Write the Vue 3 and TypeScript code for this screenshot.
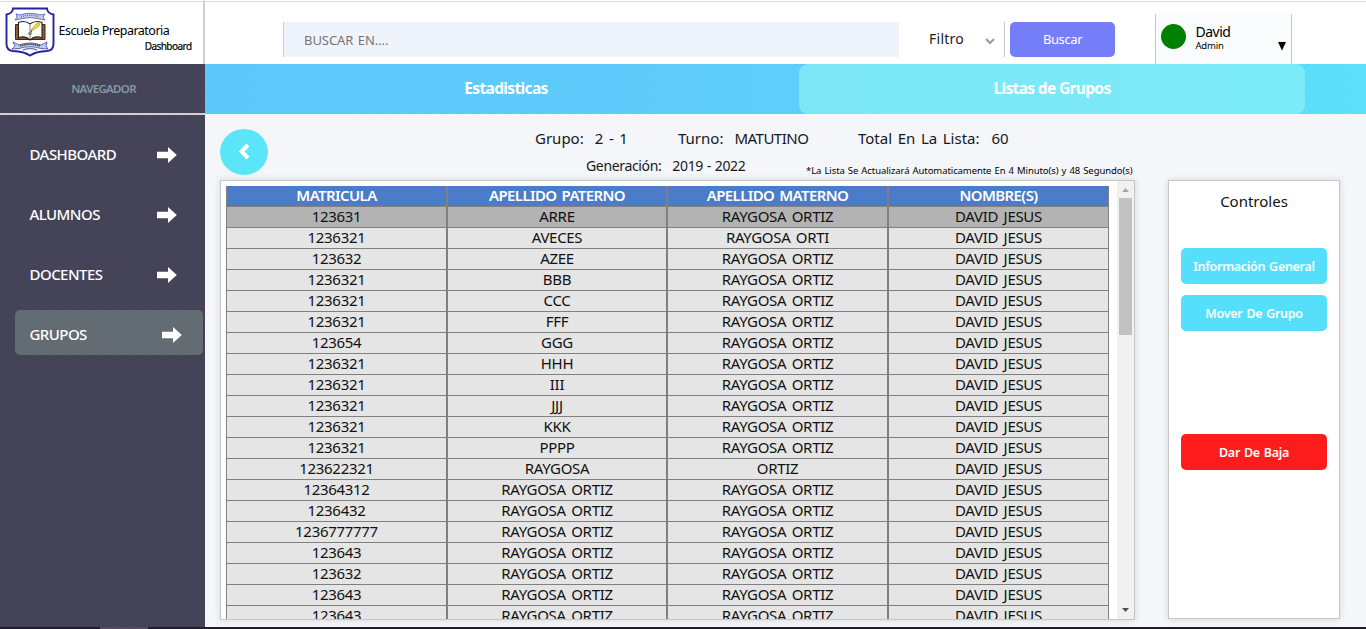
<script setup lang="ts">
interface NavItem { label: string; active?: boolean }
interface Student { id: string; paterno: string; materno: string; nombre: string }

const nav: NavItem[] = [
  { label: 'DASHBOARD' },
  { label: 'ALUMNOS' },
  { label: 'DOCENTES' },
  { label: 'GRUPOS', active: true },
]

const columns: string[] = ['MATRICULA', 'APELLIDO PATERNO', 'APELLIDO MATERNO', 'NOMBRE(S)']

const RO = 'RAYGOSA ORTIZ'
const source: [string, string, string][] = [
  ['123631', 'ARRE', RO],
  ['1236321', 'AVECES', 'RAYGOSA ORTI'],
  ['123632', 'AZEE', RO],
  ['1236321', 'BBB', RO],
  ['1236321', 'CCC', RO],
  ['1236321', 'FFF', RO],
  ['123654', 'GGG', RO],
  ['1236321', 'HHH', RO],
  ['1236321', 'III', RO],
  ['1236321', 'JJJ', RO],
  ['1236321', 'KKK', RO],
  ['1236321', 'PPPP', RO],
  ['123622321', 'RAYGOSA', 'ORTIZ'],
  ['12364312', RO, RO],
  ['1236432', RO, RO],
  ['1236777777', RO, RO],
  ['123643', RO, RO],
  ['123632', RO, RO],
  ['123643', RO, RO],
  ['123643', RO, RO],
]
const students: Student[] = source.map(([id, paterno, materno]) => ({ id, paterno, materno, nombre: 'DAVID JESUS' }))
</script>

<template>
  <div class="page">
    <div class="body">
      <aside class="sidebar">
        <div class="brand">
          <svg class="crest" width="50" height="51" viewBox="0 0 50 51">
            <path d="M8 1.500H42Q42.500 6.500 48.500 7.500V37Q48.500 43.500 42 44Q31 44.500 25 48.500Q19 44.500 8 44Q1.500 43.500 1.500 37V7.500Q7.500 6.500 8 1.500Z" fill="#fff" stroke="#24249c" stroke-width="1.900" />
            <path d="M11 7L15 8Q25 4.500 35 8L40 7L38 10L40 13L35 12Q25 9 15 12L10 13L12 10Z" fill="#c9cce9" stroke="#5057b5" stroke-width=".8" />
            <path d="M16 10Q25 6.500 34 10" fill="none" stroke="#777" stroke-width="1.400" stroke-dasharray="1 1" />
            <path d="M10.500 17.500H40V32.500H10.500Z" fill="#9a5a2e" stroke="#3b241a" />
            <path d="M13.500 15.500Q20 13 25 17Q30 13 37 15.500V31Q30 28 25 33Q20 28 13.500 31Z" fill="#fff" stroke="#222" stroke-width="1.100" />
            <path d="M25 18V32" stroke="#777" />
            <path d="M36 14.500L31 17L26.500 22.500L28 23L33.500 19.500Z" fill="#f4e022" stroke="#8c7610" stroke-width=".5" />
            <path d="M27 23L25 27" stroke="#333" />
            <circle cx="25" cy="26.500" r="1.800" fill="#7b8782" />
            <path d="M8 35L14 38Q25 34 36 38L42 35L41 39L43 42L36 41.500Q25 38 14 41.500L7 42L10 39Z" fill="#c9cce9" stroke="#3b43a4" stroke-width=".8" />
            <path d="M15 39Q25 35.500 35 39" fill="none" stroke="#444" stroke-width="1.600" stroke-dasharray="1.500 .6" />
            <path d="M18 43Q25 40 32 43" fill="none" stroke="#7077bd" stroke-width="1.500" />
          </svg>
          <div class="brand-text">
            <div class="school">Escuela Preparatoria</div>
            <div class="sub">Dashboard</div>
          </div>
        </div>
        <div class="nav-title">NAVEGADOR</div>
        <nav class="nav">
          <a v-for="item in nav" :key="item.label" class="nav-item" :class="{ active: item.active }">
            <span>{{ item.label }}</span>
            <svg width="20" height="16" viewBox="0 0 20 16"><path d="M0 4.700H11V0L19.800 8L11 16V11.300H0Z" fill="#fff" /></svg>
          </a>
        </nav>
      </aside>

      <div class="main">
        <header class="topbar">
          <div class="search">BUSCAR EN....</div>
          <div class="filter">
            <span>Filtro</span>
            <svg width="10" height="7" viewBox="0 0 10 7"><path d="M1 1L5 5L9 1" fill="none" stroke="#999" stroke-width="2" /></svg>
          </div>
          <button class="search-btn">Buscar</button>
          <div class="user">
            <span class="avatar"></span>
            <div class="who">
              <div class="name">David</div>
              <div class="role">Admin</div>
            </div>
            <svg class="caret" width="8" height="9" viewBox="0 0 8 9"><path d="M0 0H8L4 8.500Z" fill="#000" /></svg>
          </div>
        </header>

        <div class="tabs">
          <div class="tab first"><span>Estadisticas</span></div>
          <div class="tab selected"><span>Listas de Grupos</span></div>
        </div>

        <div class="content">
          <section class="left">
            <div class="heading">
              <button class="back">
                <svg width="12" height="17" viewBox="0 0 12 17"><path d="M10 2L3.500 8.500L10 15" fill="none" stroke="#fff" stroke-width="4" /></svg>
              </button>
              <div class="facts">
                <span class="grupo">Grupo:<b>2 - 1</b></span>
                <span class="turno">Turno:<b>MATUTINO</b></span>
                <span class="total">Total En La Lista:<b>60</b></span>
              </div>
              <div class="second">
                <span class="gen">Generación:<b>2019 - 2022</b></span>
                <span class="note">*La Lista Se Actualizará Automaticamente En 4 Minuto(s) y 48 Segundo(s)</span>
              </div>
            </div>
            <div class="panel list">
              <div class="grid">
                <div class="row head"><div v-for="c in columns" :key="c">{{ c }}</div></div>
                <div v-for="(s, i) in students" :key="i" class="row" :class="{ picked: i === 0 }">
                  <div>{{ s.id }}</div>
                  <div>{{ s.paterno }}</div>
                  <div>{{ s.materno }}</div>
                  <div>{{ s.nombre }}</div>
                </div>
              </div>
              <div class="scrollbar">
                <svg width="17" height="17" viewBox="0 0 17 17"><path d="M5 11L8.500 7L12 11Z" fill="#a3a3a3" /></svg>
                <div class="thumb"></div>
                <svg class="down" width="17" height="17" viewBox="0 0 17 17"><path d="M5 6L8.500 10L12 6Z" fill="#505050" /></svg>
              </div>
            </div>
          </section>

          <aside class="panel controls">
            <div class="controls-title">Controles</div>
            <button class="info">Información General</button>
            <button class="move">Mover De Grupo</button>
            <button class="drop">Dar De Baja</button>
          </aside>
        </div>
      </div>
    </div>
    <div class="strip"><i></i></div>
  </div>
</template>

<style>
body { margin: 0; }
</style>

<style scoped>
* { box-sizing: border-box; }
.page {
  width: 1366px; height: 629px; overflow: hidden; display: flex; flex-direction: column;
  font-family: "Trebuchet MS", "Noto Sans", sans-serif; font-size: 16px; color: #111; background: #f4f6fa;
}
button { border: 0; padding: 0; margin: 0; font-family: inherit; display: block; }
.body { flex: 1; display: flex; min-height: 0; }
.sidebar { width: 205px; display: flex; flex-direction: column; background: repeating-linear-gradient(135deg, transparent 0 10.314px, #00000005 10.314px 11.314px), #444357; }
.brand { height: 64px; background: #fff; border-top: 1px solid #fff; border-right: 2px solid #d0cfcf; display: flex; box-shadow: inset 0 1px #d8dcdc; }
.crest { margin: 6px 0 0 5px; flex: none; }
.brand-text { margin: 22px 0 0 3.500px; width: 133px; white-space: nowrap; }
.school { font-size: 12.500px; line-height: 16px; letter-spacing: -.5px; color: #000; }
.sub { font-size: 10px; line-height: 15px; letter-spacing: -.55px; text-align: right; color: #000; -webkit-text-stroke: .2px #000; }
.nav-title { height: 51px; border-bottom: 2px solid #d3d0d5; line-height: 49px; text-align: center; padding-left: 2px; font-size: 11.500px; letter-spacing: -.7px; color: #8598a8; font-weight: 600; }
.nav { padding: 15px 2px 0 15px; display: flex; flex-direction: column; gap: 15px; }
.nav-item { height: 45px; display: flex; align-items: center; justify-content: space-between; padding: 2px 26px 0 14.500px; color: #fff; font-size: 15px; font-weight: 500; letter-spacing: -.55px; border-radius: 5px; }
.nav-item svg { margin-top: 3px; }
.nav-item.active { background: #636b73; padding-right: 21px; }
.main { flex: 1; min-width: 0; display: flex; flex-direction: column; }
.topbar { height: 64px; flex: none; background: #fff; display: flex; border-top: 1px solid #fff; box-shadow: inset 0 1px #d8dcdc; }
.search { margin: 21px 0 0 78px; width: 616px; height: 35px; background: #eff3fb; border-left: 1px solid #c8cdd0; padding-left: 20px; line-height: 37px; font-size: 13px; letter-spacing: -.05px; word-spacing: 1px; color: #757575; }
.filter { margin-top: 21px; width: 106px; height: 35px; border-right: 1px solid #c8c8c8; display: flex; align-items: center; justify-content: space-between; padding: 0 9px 0 30px; font-size: 14px; letter-spacing: .25px; color: #222; }
.filter span { margin-top: -2px; }
.filter svg { margin-top: 3px; }
.search-btn { margin: 21px 0 0 5px; width: 105px; height: 35px; padding-bottom: 1px; background: #737ef8; color: #fff; border-radius: 5px; font-size: 13px; letter-spacing: -.4px; }
.user { margin: 13px 0 0 40px; width: 137px; height: 50px; border: solid #c8c8c8; border-width: 0 1px; background: #fafbfd; display: flex; padding-left: 5px; }
.avatar { width: 25px; height: 25px; border-radius: 50%; background: #008000; margin-top: 10px; }
.who { margin: 9px 0 0 9.500px; width: 82.500px; color: #000; }
.name { font-size: 14px; line-height: 17px; letter-spacing: -.5px; }
.role { font-size: 9.500px; line-height: 12px; letter-spacing: -.2px; }
.caret { margin-top: 28px; }
.tabs { height: 50px; flex: none; display: flex; background: repeating-linear-gradient(135deg, transparent 0 10.314px, #2079aa0a 10.314px 11.314px), linear-gradient(90deg, #5ec8fb, #5fcbfb 38%, #5de0fb); }
.tab { text-align: center; line-height: 48px; color: #fff; font-size: 15.500px; font-weight: 700; letter-spacing: -.65px; }
.first { width: 594px; padding-left: 8px; }
.selected { width: 506px; border-radius: 9px; background: #8af1f7b3; }
.content { flex: 1; min-height: 0; display: flex; padding-left: 15px; }
.left { width: 915px; }
.heading { height: 66px; display: grid; grid-template-columns: 48px 1fr; grid-template-rows: 38px 28px; }
.back { grid-row: 1 / 3; width: 48px; height: 46px; margin-top: 15px; border-radius: 50%; background: #5be5f8; display: flex; align-items: center; justify-content: center; }
.back svg { margin-bottom: 2px; }
.facts, .second { display: flex; white-space: nowrap; color: #181818; }
.facts { font-size: 15px; line-height: 49px; word-spacing: 1.700px; }
b { font-weight: 400; margin-left: 11px; }
.grupo { width: 143px; margin-left: 267px; }
.turno { width: 180px; }
.turno b { letter-spacing: -.5px; }
.total b { margin-left: 12px; }
.second { line-height: 28px; }
.gen { margin-left: 318px; width: 220px; font-size: 14px; letter-spacing: -.35px; word-spacing: .5px; }
.note { font-size: 9.500px; line-height: 38px; letter-spacing: -.08px; word-spacing: .7px; color: #000; }
.panel { background: #fff; border: 1px solid #c6c8c8; box-shadow: 0 0 7px #0002; }
.list { height: 440px; padding: 5px 0 0 5px; display: flex; justify-content: space-between; overflow: hidden; }
.grid { width: 883px; height: 433px; overflow: hidden; }
.row { display: grid; grid-template-columns: 221px 220px 221px 221px; height: 21px; background: #e5e5e5; }
.row > div { border: 1px solid #808080; border-top: 0; height: 21px; line-height: 19px; text-align: center; font-size: 15px; letter-spacing: -.3px; word-spacing: 1.800px; color: #111; white-space: nowrap; }
.row.head { background: #4a7cc9; }
.row.head > div { color: #fff; font-weight: 600; font-size: 15px; letter-spacing: -.6px; word-spacing: 1.700px; }
.row.picked { background: #b3b3b3; }
.scrollbar { width: 17px; height: 438px; margin-top: -5px; background: #f1f1f1; display: flex; flex-direction: column; }
.thumb { width: 13px; height: 137px; margin-left: 2px; background: #c1c1c1; }
.down { margin-top: auto; }
.controls { margin: 66px 0 0 33px; width: 172px; height: 439px; padding: 0 12px; }
.controls-title { height: 67px; padding-top: 9px; line-height: 22px; text-align: center; font-size: 15px; }
.controls button { width: 146px; height: 36px; border-radius: 5px; background: #55dffb; color: #fff; font-size: 12.500px; font-weight: 600; letter-spacing: -.3px; word-spacing: 1px; white-space: nowrap; }
.controls .move { margin-top: 11px; }
.controls .drop { margin-top: 103px; background: #fe1c1c; }
.strip { height: 2px; flex: none; background: #231b2e; padding-left: 100px; }
.strip i { display: block; width: 48px; height: 2px; background: #5b4861; }
</style>
